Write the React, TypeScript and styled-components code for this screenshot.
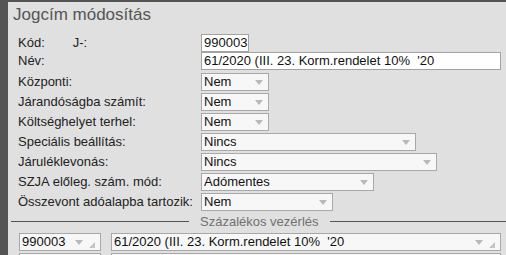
import React from 'react';
import styled, { createGlobalStyle } from 'styled-components';

const GlobalStyle = createGlobalStyle`
  html, body {
    margin: 0;
    padding: 0;
    background: #545454;
    font-family: "Liberation Sans", Arial, sans-serif;
  }
`;

const Frame = styled.div`
  width: 506px;
  height: 255px;
  padding: 2px 0 0 8px;
  box-sizing: border-box;
  overflow: hidden;
`;

const Panel = styled.div`
  background: #e0e0e0;
  min-height: 100%;
  display: flex;
  flex-direction: column;
`;

const Title = styled.div`
  flex-shrink: 0;
  font-size: 17px;
  color: #555;
  padding: 3px 0 0 5px;
  height: 32px;
  box-sizing: border-box;
`;

const Form = styled.div`
  flex-shrink: 0;
  display: flex;
  flex-direction: column;
  padding-left: 10px;
`;

const Row = styled.div<{ $h?: number }>`
  flex-shrink: 0;
  display: flex;
  align-items: flex-start;
  height: ${({ $h }) => $h ?? 20}px;
`;

const Label = styled.div`
  width: 183px;
  height: 18px;
  line-height: 18px;
  font-size: 13px;
  color: #222;
  display: flex;
  white-space: nowrap;
`;

const SubLabel = styled.span`
  margin-left: 28px;
`;

const Input = styled.div<{ $w: number }>`
  width: ${({ $w }) => $w}px;
  height: 18px;
  box-sizing: border-box;
  border: 1px solid #a3a3a3;
  background: #fff;
  font-size: 13px;
  line-height: 16px;
  color: #111;
  padding-left: 2px;
  white-space: pre;
  overflow: hidden;
`;

const Select = styled.div<{ $w: number }>`
  flex-shrink: 0;
  width: ${({ $w }) => $w}px;
  height: 18px;
  box-sizing: border-box;
  border: 1px solid #a8a8a8;
  background: #f7f7f7;
  font-size: 13px;
  line-height: 16px;
  color: #111;
  padding: 0 5px 0 2px;
  display: flex;
  align-items: center;
  gap: 6px;
  white-space: pre;
`;

const Value = styled.span`
  flex: 1;
  overflow: hidden;
`;

const Legend = styled.div`
  flex-shrink: 0;
  display: flex;
  align-items: center;
  gap: 11px;
  margin: -2px 0 0 3px;
  height: 20px;
  font-size: 13px;
  color: #707070;
`;

const Rule = styled.div<{ $w?: number }>`
  height: 1px;
  background: #555;
  ${({ $w }) => ($w ? `width: ${$w}px;` : 'flex: 1;')}
`;

const GridRow = styled.div`
  flex-shrink: 0;
  display: flex;
  gap: 10px;
  padding-left: 11px;
  margin-top: 2px;
  height: 18px;
`;

const Arrow = () => (
  <svg width="8" height="5" viewBox="0 0 8 5">
    <path d="M0 0H8L4 5Z" fill="#b9b9b9" />
  </svg>
);

const Corner = () => (
  <svg width="6" height="6" viewBox="0 0 6 6" style={{ alignSelf: 'flex-end', marginBottom: 2 }}>
    <path d="M6 0V6H0Z" fill="#c4c4c4" />
  </svg>
);

const Combo = ({ w, value, corner }: { w: number; value: string; corner?: boolean }) => (
  <Select $w={w}>
    <Value>{value}</Value>
    <Arrow />
    {corner && <Corner />}
  </Select>
);

export default function App() {
  return (
    <Frame>
      <GlobalStyle />
      <Panel>
        <Title>Jogcím módosítás</Title>
        <Form>
          <Row $h={18}>
            <Label>
              Kód:<SubLabel>J-:</SubLabel>
            </Label>
            <Input $w={48}>990003</Input>
          </Row>
          <Row $h={21}>
            <Label>Név:</Label>
            <Input $w={300}>61/2020 (III. 23. Korm.rendelet 10%  '20</Input>
          </Row>
          <Row>
            <Label>Központi:</Label>
            <Combo w={68} value="Nem" />
          </Row>
          <Row>
            <Label>Járandóságba számít:</Label>
            <Combo w={68} value="Nem" />
          </Row>
          <Row>
            <Label>Költséghelyet terhel:</Label>
            <Combo w={68} value="Nem" />
          </Row>
          <Row>
            <Label>Speciális beállítás:</Label>
            <Combo w={215} value="Nincs" />
          </Row>
          <Row>
            <Label>Járuléklevonás:</Label>
            <Combo w={236} value="Nincs" />
          </Row>
          <Row>
            <Label>SZJA előleg. szám. mód:</Label>
            <Combo w={173} value="Adómentes" />
          </Row>
          <Row>
            <Label>Összevont adóalapba tartozik:</Label>
            <Combo w={132} value="Nem" />
          </Row>
        </Form>
        <Legend>
          <Rule $w={178} />
          Százalékos vezérlés
          <Rule />
        </Legend>
        <GridRow>
          <Combo w={82} value="990003" corner />
          <Combo w={390} value="61/2020 (III. 23. Korm.rendelet 10%  '20" corner />
        </GridRow>
        <GridRow>
          <Combo w={82} value="" />
          <Combo w={390} value="" />
        </GridRow>
      </Panel>
    </Frame>
  );
}
